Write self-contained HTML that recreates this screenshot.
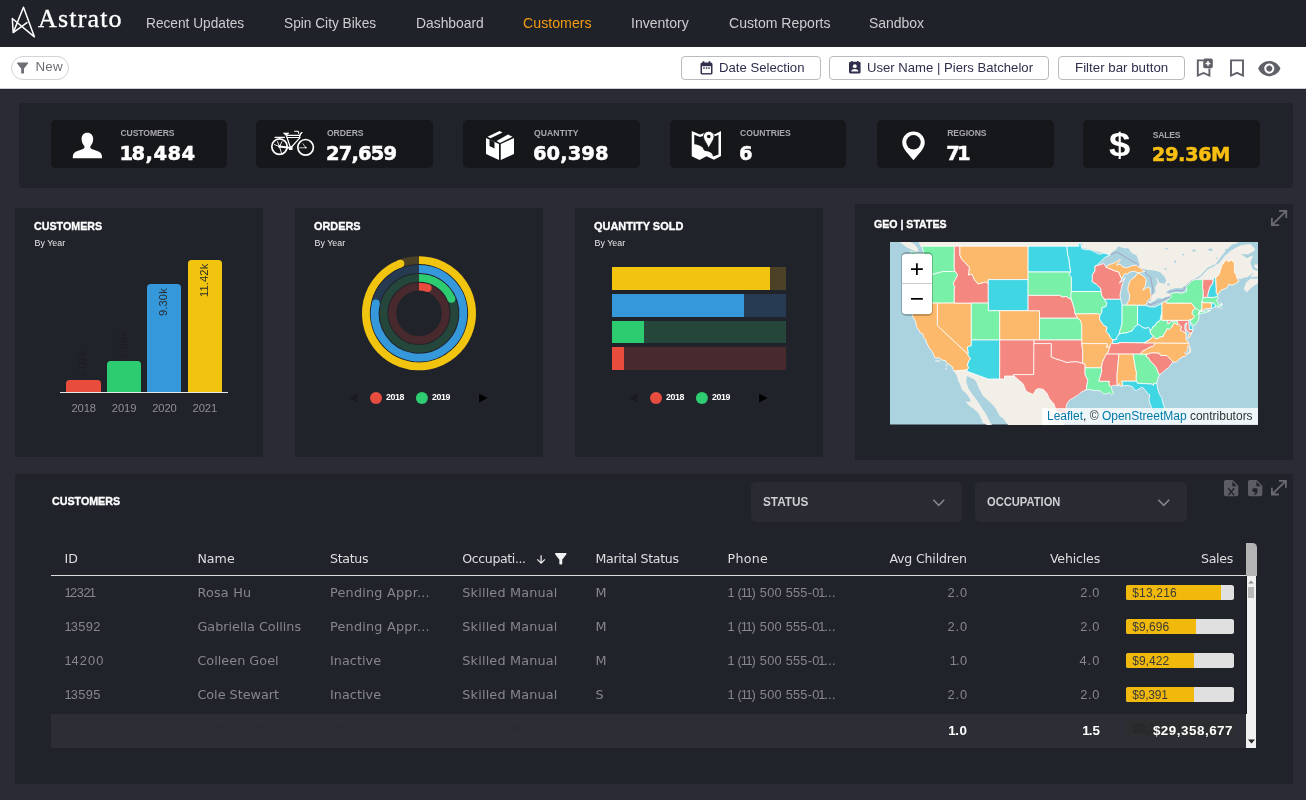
<!DOCTYPE html>
<html lang="en"><head><meta charset="utf-8"><title>Astrato - Customers</title><style>html,body{margin:0;padding:0}body{width:1306px;height:800px;background:#2a2b35;position:relative;overflow:hidden;font-family:"Liberation Sans",sans-serif}
.b{position:absolute;display:block}.t{position:absolute;white-space:nowrap;display:block}.n1{margin:0 -0.1em}svg{overflow:visible}</style></head>
<body>
<div id="app" style="position:absolute;left:0;top:0;width:1306px;height:800px;will-change:transform">
<div class="b" style="left:0px;top:0px;width:1306px;height:47px;background:#20222a;"></div>
<svg class="b" style="left:8px;top:2px;" width="32" height="40" viewBox="8 2 32 40"><path d="M12.3 18.5L34.4 36.8L23.5 7.2L13.2 32.6L27 22.6M12.3 18.5L13.2 32.6" fill="none" stroke="#fff" stroke-width="1.5" stroke-linejoin="round" stroke-linecap="round"/></svg>
<span id="logo" class="t" style="left:38.00px;top:5.82px;font:400 26px/1 'Liberation Serif', serif;color:#fff;letter-spacing:1.176px;-webkit-text-stroke:0.35px #fff;">Astrato</span>
<span id="nav0" class="t" style="left:146.00px;top:15.00px;font:400 15px/1 'Liberation Sans', sans-serif;color:#cdcdcf;transform:scaleX(0.9128);transform-origin:0 0;">Recent Updates</span>
<span id="nav1" class="t" style="left:283.90px;top:15.00px;font:400 15px/1 'Liberation Sans', sans-serif;color:#cdcdcf;transform:scaleX(0.9130);transform-origin:0 0;">Spin City Bikes</span>
<span id="nav2" class="t" style="left:415.90px;top:15.00px;font:400 15px/1 'Liberation Sans', sans-serif;color:#cdcdcf;transform:scaleX(0.9238);transform-origin:0 0;">Dashboard</span>
<span id="nav3" class="t" style="left:523.40px;top:15.00px;font:400 15px/1 'Liberation Sans', sans-serif;color:#f39c12;transform:scaleX(0.9458);transform-origin:0 0;">Customers</span>
<span id="nav4" class="t" style="left:631.20px;top:15.00px;font:400 15px/1 'Liberation Sans', sans-serif;color:#cdcdcf;transform:scaleX(0.9367);transform-origin:0 0;">Inventory</span>
<span id="nav5" class="t" style="left:728.50px;top:15.00px;font:400 15px/1 'Liberation Sans', sans-serif;color:#cdcdcf;transform:scaleX(0.9366);transform-origin:0 0;">Custom Reports</span>
<span id="nav6" class="t" style="left:869.20px;top:15.00px;font:400 15px/1 'Liberation Sans', sans-serif;color:#cdcdcf;transform:scaleX(0.9304);transform-origin:0 0;">Sandbox</span>
<div class="b" style="left:0px;top:47px;width:1306px;height:41px;background:#fff;"></div>
<div class="b" style="left:0px;top:88px;width:1306px;height:1px;background:#cfcfd3;"></div>
<div class="b" style="left:0px;top:89px;width:1306px;height:1px;background:#20212a;"></div>
<div class="b" style="left:11px;top:56px;width:58px;height:23.5px;border:1px solid #d2d2d7;border-radius:12px;box-sizing:border-box"></div>
<svg class="b" style="left:17.4px;top:61.6px;" width="11.200000000000003" height="11.999999999999993" viewBox="4 4 16 16"><path d="M4.25 5.61C6.27 8.2 10 13 10 13v6c0 .55.45 1 1 1h2c.55 0 1-.45 1-1v-6s3.72-4.8 5.74-7.39A.998.998 0 0 0 18.95 4H5.04c-.83 0-1.3.95-.79 1.61z" fill="#6d6d76"/></svg>
<span id="new" class="t" style="left:35.50px;top:60.46px;font:400 13.4px/1 'Liberation Sans', sans-serif;color:#6d6d76;letter-spacing:0.152px;">New</span>
<div class="b" style="left:681.4px;top:56px;width:139.39999999999998px;height:23.6px;border:1px solid #b9b9c0;border-radius:4px;box-sizing:border-box"></div>
<div class="b" style="left:829.2px;top:56px;width:220.20000000000005px;height:23.6px;border:1px solid #b9b9c0;border-radius:4px;box-sizing:border-box"></div>
<div class="b" style="left:1058.1px;top:56px;width:126.5px;height:23.6px;border:1px solid #b9b9c0;border-radius:4px;box-sizing:border-box"></div>
<svg class="b" style="left:699.5px;top:61px;" width="13.0" height="14" viewBox="0 0 13 14"><path d="M2.2 1.6h8.6a1.7 1.7 0 0 1 1.7 1.7v8.6a1.7 1.7 0 0 1-1.7 1.7H2.2a1.7 1.7 0 0 1-1.7-1.7V3.3a1.7 1.7 0 0 1 1.7-1.7z" fill="#2f2f4d"/><rect x="2" y="5.2" width="9" height="6.9" fill="#fff"/><rect x="2.7" y="0.2" width="1.7" height="2.6" fill="#2f2f4d"/><rect x="8.6" y="0.2" width="1.7" height="2.6" fill="#2f2f4d"/><rect x="3.2" y="6.3" width="1.5" height="1.5" fill="#2f2f4d"/><rect x="5.75" y="6.3" width="1.5" height="1.5" fill="#2f2f4d"/><rect x="8.3" y="6.3" width="1.5" height="1.5" fill="#2f2f4d"/></svg>
<span id="fb1" class="t" style="left:718.70px;top:60.59px;font:400 13.6px/1 'Liberation Sans', sans-serif;color:#2f2f4d;transform:scaleX(0.9670);transform-origin:0 0;">Date Selection</span>
<svg class="b" style="left:848.6px;top:61.2px;" width="11.600000000000023" height="12.599999999999994" viewBox="0 0 11.6 12.6"><rect x="0" y="0.8" width="11.6" height="11.8" rx="1.5" fill="#2f2f4d"/><rect x="2.2" y="0" width="1.5" height="2" fill="#2f2f4d"/><rect x="7.9" y="0" width="1.5" height="2" fill="#2f2f4d"/><circle cx="5.8" cy="5.2" r="1.9" fill="#fff"/><path d="M2.2 10.6c0-2 2.4-2.6 3.6-2.6s3.6.6 3.6 2.6z" fill="#fff"/></svg>
<span id="fb2" class="t" style="left:866.80px;top:60.59px;font:400 13.6px/1 'Liberation Sans', sans-serif;color:#2f2f4d;transform:scaleX(0.9651);transform-origin:0 0;">User Name | Piers Batchelor</span>
<span id="fb3" class="t" style="left:1074.60px;top:60.59px;font:400 13.6px/1 'Liberation Sans', sans-serif;color:#2f2f4d;transform:scaleX(0.9790);transform-origin:0 0;">Filter bar button</span>
<svg class="b" style="left:1196px;top:58px;" width="18" height="20" viewBox="0 0 18 20"><path d="M7.2 2.4H1.8V17.6L7.6 15l5.8 2.6V10.4" fill="none" stroke="#5f6068" stroke-width="1.9"/><rect x="7.2" y="0.6" width="9.6" height="9.6" rx="1.6" fill="#5f6068"/><path d="M12 3v4.8M9.6 5.4h4.8" stroke="#fff" stroke-width="1.5"/></svg>
<svg class="b" style="left:1229px;top:58px;" width="16" height="20" viewBox="0 0 16 20"><path d="M2 2.4H14V17.6L8 14.8L2 17.6z" fill="none" stroke="#5f6068" stroke-width="1.9" stroke-linejoin="miter"/></svg>
<svg class="b" style="left:1257.7px;top:60.5px;" width="22.59999999999991" height="15.200000000000003" viewBox="1 4.5 22 15"><path d="M12 4.5C7 4.5 2.73 7.61 1 12c1.73 4.39 6 7.5 11 7.5s9.27-3.11 11-7.5c-1.73-4.39-6-7.5-11-7.5zM12 17c-2.76 0-5-2.24-5-5s2.24-5 5-5 5 2.24 5 5-2.24 5-5 5zm0-8c-1.66 0-3 1.34-3 3s1.34 3 3 3 3-1.34 3-3-1.34-3-3-3z" fill="#5f6068"/></svg>
<div class="b" style="left:19px;top:103px;width:1274px;height:84.5px;background:#21232b;border-radius:4px;"></div>
<div class="b" style="left:51px;top:120px;width:176px;height:48px;background:#16171b;border-radius:5px;"></div>
<div class="b" style="left:256px;top:120px;width:177px;height:48px;background:#16171b;border-radius:5px;"></div>
<div class="b" style="left:463px;top:120px;width:177px;height:48px;background:#16171b;border-radius:5px;"></div>
<div class="b" style="left:670px;top:120px;width:176px;height:48px;background:#16171b;border-radius:5px;"></div>
<div class="b" style="left:877px;top:120px;width:177px;height:48px;background:#16171b;border-radius:5px;"></div>
<div class="b" style="left:1083px;top:120px;width:177px;height:48px;background:#16171b;border-radius:5px;"></div>
<span id="kl0" class="t" style="left:120.40px;top:129.02px;font:700 8.6px/1 'Liberation Sans', sans-serif;color:#a9a9ad;letter-spacing:-0.071px;">CUSTOMERS</span>
<span id="kv0" class="t" style="left:121.35px;top:143.70px;font:700 19.5px/1 'DejaVu Sans', sans-serif;color:#fff;letter-spacing:0.462px;-webkit-text-stroke:0.5px #fff;"><span style="margin:0 -0.1em">1</span>8,484</span>
<span id="kl1" class="t" style="left:326.90px;top:129.02px;font:700 8.6px/1 'Liberation Sans', sans-serif;color:#a9a9ad;letter-spacing:-0.016px;">ORDERS</span>
<span id="kv1" class="t" style="left:325.90px;top:143.70px;font:700 19.5px/1 'DejaVu Sans', sans-serif;color:#fff;letter-spacing:-0.810px;-webkit-text-stroke:0.5px #fff;">27,659</span>
<span id="kl2" class="t" style="left:533.90px;top:129.02px;font:700 8.6px/1 'Liberation Sans', sans-serif;color:#a9a9ad;letter-spacing:0.111px;">QUANTITY</span>
<span id="kv2" class="t" style="left:532.90px;top:143.70px;font:700 19.5px/1 'DejaVu Sans', sans-serif;color:#fff;letter-spacing:0.090px;-webkit-text-stroke:0.5px #fff;">60,398</span>
<span id="kl3" class="t" style="left:740.00px;top:129.02px;font:700 8.6px/1 'Liberation Sans', sans-serif;color:#a9a9ad;letter-spacing:0.022px;">COUNTRIES</span>
<span id="kv3" class="t" style="left:739.00px;top:143.70px;font:700 19.5px/1 'DejaVu Sans', sans-serif;color:#fff;-webkit-text-stroke:0.5px #fff;">6</span>
<span id="kl4" class="t" style="left:947.20px;top:129.02px;font:700 8.6px/1 'Liberation Sans', sans-serif;color:#a9a9ad;letter-spacing:-0.040px;">REGIONS</span>
<span id="kv4" class="t" style="left:946.20px;top:143.70px;font:700 19.5px/1 'DejaVu Sans', sans-serif;color:#fff;letter-spacing:-0.881px;-webkit-text-stroke:0.5px #fff;">7<span style="margin:0 -0.1em">1</span></span>
<span id="kl5" class="t" style="left:1152.80px;top:130.82px;font:700 8.6px/1 'Liberation Sans', sans-serif;color:#a9a9ad;letter-spacing:-0.239px;">SALES</span>
<span id="kv5" class="t" style="left:1151.80px;top:144.50px;font:700 19.5px/1 'DejaVu Sans', sans-serif;color:#f9bf10;letter-spacing:-0.479px;-webkit-text-stroke:0.5px #f9bf10;">29.36M</span>
<svg class="b" style="left:72px;top:132px;" width="31" height="27" viewBox="0 0 31 27"><path d="M15.3 0.8c3.6 0 5.9 2.6 5.9 6.3 0 2.9-1.2 5.4-2.6 6.8-.5.5-.4 2.2.3 2.6 2.4 1.300 7.600 2.300 9.800 4.600 1.100 1.100 1.300 3.300 1.300 5.100H.800c0-1.800.2-4 1.300-5.100 2.200-2.300 7.400-3.300 9.800-4.600.7-.4.8-2.100.3-2.600-1.400-1.400-2.600-3.900-2.600-6.800 0-3.700 2.100-6.300 5.700-6.300z" fill="#fff"/></svg>
<svg class="b" style="left:270px;top:128px;" width="46" height="30" viewBox="270 128 46 30"><g fill="none" stroke="#fff" stroke-linecap="round" stroke-linejoin="round"><circle cx="279.5" cy="146.6" r="7.7" stroke-width="1.7"/><circle cx="305.6" cy="147.3" r="7.8" stroke-width="1.7"/><path d="M286 134.500L290.600 148M287.500 135.300H299.600M287.700 137.500H299.300M300 137.700L291.500 147M301 133L299.300 137.600M275 137.300H284.500" stroke-width="1.200"/><path d="M279.500 146.600L289.500 147.700" stroke-width="2"/><path d="M279.500 146.600l-2-5M279.500 146.600l2.500-5M279.500 146.600l-5-2M279.500 146.600l2 6.500" stroke-width="0.900"/><path d="M305.600 147.500l-2.600-3.800M299.600 147.800h5.600" stroke-width="0.900" stroke-opacity="0.800"/><path d="M294.600 131.300h3.600l.5 2.200M300.200 134.300l1.800-2" stroke-width="1.100"/></g><path d="M283.300 133h5.700l-1.700 1.800h-2.200z" fill="#fff" stroke="#fff" stroke-width="0.600" stroke-linejoin="round"/><rect x="289" y="146.400" width="3.600" height="3.600" rx="0.600" fill="#fff"/><circle cx="279.500" cy="146.600" r="1.300" fill="#fff"/><circle cx="305.800" cy="147.600" r="0.900" fill="#fff"/></svg>
<svg class="b" style="left:485px;top:130px;" width="30" height="31" viewBox="485 130 30 31"><path d="M486 138L499 144V160L486 154z M500.750 144L514 138V154L500.750 160z M487.500 136.750L499.500 131L502.500 132.500L490.500 138.250z M496.500 141L508 134.500L512.500 136.750L500 143z" fill="#fff"/><path d="M489.500 139.600V146L494.500 148.500V141.900z" fill="#16171b"/></svg>
<svg class="b" style="left:691px;top:130px;" width="31" height="31" viewBox="691 130 31 31"><path d="M691.750 131L700 134.500L708.750 131.500L715 134.250L721 131V156L714 159.750L706.500 156.250L699.500 160L691.750 156.250z" fill="#fff"/><path d="M694.250 134.750L700 136.900L708.600 134L715 136.300L718.500 134.700V154.500L713 156.500C712.600 154.500 712 153.300 710.500 152.500C708.500 151.200 706 151.600 704.300 150.600C703.200 149.600 703.300 148.200 702 147.100C700 145.500 697 144.600 694.250 144.250z" fill="#16171b"/><path d="M708.750 131.250c3 0 5.400 2.300 5.400 5.200 0 3.700-3.900 7.300-5.400 12.100-1.500-4.800-5.400-8.400-5.400-12.100 0-2.900 2.400-5.200 5.400-5.200z" fill="#fff" stroke="#16171b" stroke-width="0.900"/><circle cx="708.750" cy="136.500" r="1.800" fill="#16171b"/></svg>
<svg class="b" style="left:902px;top:130.5px;" width="23.5" height="30.0" viewBox="902 130.500 23.500 30"><path d="M913.500 131c6.300 0 11.250 4.800 11.250 11 0 6.600-6.800 12-11.250 17.800-4.450-5.800-11.250-11.200-11.250-17.800 0-6.200 4.950-11 11.250-11z" fill="#fff"/><circle cx="913.500" cy="141.800" r="7.200" fill="#16171b"/></svg>
<span id="dollar" class="t" style="left:1108.60px;top:128.07px;font:700 33px/1 'Liberation Sans', sans-serif;color:#fff;transform-origin:0 0;transform:scaleX(1.16);">$</span>
<div class="b" style="left:15.2px;top:208px;width:247.5px;height:249px;background:#21232b;"></div>
<div class="b" style="left:295.2px;top:208px;width:247.50000000000006px;height:249px;background:#21232b;"></div>
<div class="b" style="left:575.2px;top:208px;width:247.5px;height:249px;background:#21232b;"></div>
<div class="b" style="left:855px;top:204px;width:438px;height:256px;background:#21232b;"></div>
<span id="ct1" class="t" style="left:34.20px;top:220.83px;font:700 11.3px/1 'Liberation Sans', sans-serif;color:#fff;-webkit-text-stroke:0.35px #fff;transform:scaleX(0.9474);transform-origin:0 0;">CUSTOMERS</span>
<span id="ct2" class="t" style="left:314.20px;top:220.83px;font:700 11.3px/1 'Liberation Sans', sans-serif;color:#fff;-webkit-text-stroke:0.35px #fff;transform:scaleX(0.9639);transform-origin:0 0;">ORDERS</span>
<span id="ct3" class="t" style="left:594.20px;top:220.83px;font:700 11.3px/1 'Liberation Sans', sans-serif;color:#fff;-webkit-text-stroke:0.35px #fff;transform:scaleX(0.9700);transform-origin:0 0;">QUANTITY SOLD</span>
<span id="cs0" class="t" style="left:34.50px;top:239.45px;font:400 8.8px/1 'Liberation Sans', sans-serif;color:#e8e8e8;letter-spacing:0.045px;">By Year</span>
<span id="cs1" class="t" style="left:314.50px;top:239.45px;font:400 8.8px/1 'Liberation Sans', sans-serif;color:#e8e8e8;letter-spacing:0.045px;">By Year</span>
<span id="cs2" class="t" style="left:594.50px;top:239.45px;font:400 8.8px/1 'Liberation Sans', sans-serif;color:#e8e8e8;letter-spacing:0.045px;">By Year</span>
<span id="ct4" class="t" style="left:874.30px;top:218.99px;font:700 11px/1 'Liberation Sans', sans-serif;color:#fff;-webkit-text-stroke:0.35px #fff;transform:scaleX(0.9615);transform-origin:0 0;">GEO | STATES</span>
<div class="b" style="left:66.2px;top:380.1px;width:34.4px;height:11.899999999999977px;background:#e74c3c;border-radius:3.5px 3.5px 0 0"></div>
<div class="b" style="left:106.6px;top:360.9px;width:34.4px;height:31.100000000000023px;background:#2ecc71;border-radius:3.5px 3.5px 0 0"></div>
<div class="b" style="left:147.1px;top:284.1px;width:34.4px;height:107.89999999999998px;background:#3498db;border-radius:3.5px 3.5px 0 0"></div>
<div class="b" style="left:187.6px;top:259.8px;width:34.4px;height:132.2px;background:#f1c40f;border-radius:3.5px 3.5px 0 0"></div>
<div class="b" style="left:59.5px;top:392px;width:168.5px;height:1.1999999999999886px;background:#e6e6e6;"></div>
<span id="yr0" class="t" style="left:71.40px;top:402.62px;font:400 11.2px/1 'Liberation Sans', sans-serif;color:#8f8f93;letter-spacing:-0.097px;">2018</span>
<span id="yr1" class="t" style="left:111.80px;top:402.62px;font:400 11.2px/1 'Liberation Sans', sans-serif;color:#8f8f93;letter-spacing:-0.097px;">2019</span>
<span id="yr2" class="t" style="left:152.20px;top:402.62px;font:400 11.2px/1 'Liberation Sans', sans-serif;color:#8f8f93;letter-spacing:-0.097px;">2020</span>
<span id="yr3" class="t" style="left:192.60px;top:402.62px;font:400 11.2px/1 'Liberation Sans', sans-serif;color:#8f8f93;letter-spacing:-0.097px;">2021</span>
<span id='v0' class='t' style="left:83.4px;top:378px;font:400 11.2px/1 'Liberation Sans',sans-serif;color:#1d1e25;transform-origin:0 0;transform:rotate(-90deg) translate(0,-50%);letter-spacing:0.1px">1.01k</span>
<span id='v1' class='t' style="left:123.8px;top:359px;font:400 11.2px/1 'Liberation Sans',sans-serif;color:#1d1e25;transform-origin:0 0;transform:rotate(-90deg) translate(0,-50%);letter-spacing:0.1px">2.66k</span>
<span id='v2' class='t' style="left:164.4px;top:315.5px;font:400 11.2px/1 'Liberation Sans',sans-serif;color:#2b2b2b;transform-origin:0 0;transform:rotate(-90deg) translate(0,-50%);letter-spacing:0.1px">9.30k</span>
<span id='v3' class='t' style="left:204.8px;top:296.5px;font:400 11.2px/1 'Liberation Sans',sans-serif;color:#2b2b2b;transform-origin:0 0;transform:rotate(-90deg) translate(0,-50%);letter-spacing:0.1px">11.42k</span>
<svg class="b" style="left:359px;top:253px;" width="120" height="120" viewBox="359 253 120 120"><circle cx="419" cy="313.3" r="53.1" fill="none" stroke="#4a4126" stroke-width="7.8"/><path d="M419 260.2A53.1 53.1 0 1 1 400.40 263.56" fill="none" stroke="#f1c40f" stroke-width="7.8"/><circle cx="400.40" cy="263.56" r="3.9" fill="#f1c40f"/><circle cx="419" cy="313.3" r="44.3" fill="none" stroke="#263a52" stroke-width="7.8"/><path d="M419 269.0A44.3 44.3 0 1 1 375.84 303.33" fill="none" stroke="#3498db" stroke-width="7.8"/><circle cx="375.84" cy="303.33" r="3.9" fill="#3498db"/><circle cx="419" cy="313.3" r="35.5" fill="none" stroke="#25463a" stroke-width="7.8"/><path d="M419 277.8A35.5 35.5 0 0 1 451.43 298.86" fill="none" stroke="#2ecc71" stroke-width="7.8"/><circle cx="451.43" cy="298.86" r="3.9" fill="#2ecc71"/><circle cx="419" cy="313.3" r="26.7" fill="none" stroke="#482a2e" stroke-width="7.8"/><path d="M419 286.6A26.7 26.7 0 0 1 427.69 288.05" fill="none" stroke="#e74c3c" stroke-width="7.8"/><circle cx="427.69" cy="288.05" r="3.9" fill="#e74c3c"/></svg>
<svg class="b" style="left:345px;top:390px;" width="150" height="16" viewBox="345 390 150 16"><path d="M357.2 393.8V402.5L349.5 398.1z" fill="#1a1b21"/><path d="M479.2 393.8V402.5L487.4 398.1z" fill="#000"/><circle cx="376" cy="397.9" r="6" fill="#e74c3c"/><circle cx="421.9" cy="397.9" r="6" fill="#2ecc71"/></svg>
<span id="lg1a" class="t" style="left:386.10px;top:393.35px;font:700 8.8px/1 'Liberation Sans', sans-serif;color:#fff;letter-spacing:-0.459px;">2018</span>
<span id="lg1b" class="t" style="left:432.00px;top:393.35px;font:700 8.8px/1 'Liberation Sans', sans-serif;color:#fff;letter-spacing:-0.393px;">2019</span>
<svg class="b" style="left:625px;top:390px;" width="150" height="16" viewBox="625 390 150 16"><path d="M637.2 393.8V402.5L629.5 398.1z" fill="#1a1b21"/><path d="M759.2 393.8V402.5L767.4 398.1z" fill="#000"/><circle cx="656" cy="397.9" r="6" fill="#e74c3c"/><circle cx="701.9" cy="397.9" r="6" fill="#2ecc71"/></svg>
<span id="lg2a" class="t" style="left:666.10px;top:393.35px;font:700 8.8px/1 'Liberation Sans', sans-serif;color:#fff;letter-spacing:-0.459px;">2018</span>
<span id="lg2b" class="t" style="left:712.00px;top:393.35px;font:700 8.8px/1 'Liberation Sans', sans-serif;color:#fff;letter-spacing:-0.393px;">2019</span>
<div class="b" style="left:611.7px;top:266.9px;width:174.5999999999999px;height:22.900000000000034px;background:#4a4126;"></div>
<div class="b" style="left:611.7px;top:266.9px;width:158.5999999999999px;height:22.900000000000034px;background:#f1c40f;"></div>
<div class="b" style="left:611.7px;top:293.8px;width:174.5999999999999px;height:22.80000000000001px;background:#263a52;"></div>
<div class="b" style="left:611.7px;top:293.8px;width:132.29999999999995px;height:22.80000000000001px;background:#3498db;"></div>
<div class="b" style="left:611.7px;top:320.5px;width:174.5999999999999px;height:22.80000000000001px;background:#25463a;"></div>
<div class="b" style="left:611.7px;top:320.5px;width:32.299999999999955px;height:22.80000000000001px;background:#2ecc71;"></div>
<div class="b" style="left:611.7px;top:347px;width:174.5999999999999px;height:23px;background:#482a2e;"></div>
<div class="b" style="left:611.7px;top:347px;width:12.299999999999955px;height:23px;background:#e74c3c;"></div>
<svg class="b" style="left:890px;top:242px;overflow:hidden" width="368" height="182.5" viewBox="0 0 368 182.5"><rect width="368" height="182.5" fill="#aad3df"/><g fill="#f2efe9"><path d="M28.6 -2.8L29.2 2.0L30.3 4.2L32.0 5.1L189.6 5.1L220.3 12.8L222.6 9.8L226.0 7.7L228.3 4.6L234.0 6.4L238.5 6.4L241.4 11.1L246.5 13.6L247.6 17.0L249.3 21.2L248.8 24.9L250.2 25.2L251.6 27.0L256.2 27.8L260.7 28.2L265.8 29.1L269.8 30.3L274.4 34.8L276.1 38.8L274.4 41.6L269.5 40.8L266.4 35.6L265.3 36.0L267.5 40.8L265.0 45.2L265.3 50.3L261.3 53.4L260.7 56.5L260.1 58.8L257.3 59.6L257.3 61.1L260.7 61.1L264.7 58.8L268.1 56.1L272.7 56.9L274.9 55.3L279.5 54.6L280.9 53.8L280.3 51.5L276.1 51.1L278.4 48.3L286.3 46.0L291.4 46.4L294.9 44.0L297.7 43.2L301.7 39.2L305.1 37.7L320.5 38.4L331.8 37.6L337.5 33.5L345.5 35.2L347.3 36.4L350.0 37.2L354.3 35.4L357.4 35.2L360.6 32.7L362.5 31.5L364.0 31.1L360.8 34.0L360.6 34.9L364.3 34.8L368.2 34.8L368.2 36.4L363.7 36.8L360.8 36.4L356.0 40.6L353.7 47.1L356.9 50.3L362.0 45.3L368.2 40.8L371.7 40.0L371.7 29.5L367.1 28.7L363.1 27.4L361.4 23.7L360.3 20.4L361.4 17.9L363.1 13.2L360.3 14.5L356.6 16.2L352.9 13.2L350.6 12.8L354.6 11.9L357.4 12.4L362.0 10.2L364.8 8.5L364.8 6.4L360.3 2.0L351.7 3.1L346.1 5.5L340.4 8.9L334.4 14.2L329.0 21.2L325.0 22.9L329.0 17.5L333.5 11.5L337.5 6.8L342.4 2.5L346.6 1.6L351.7 -6.3L351.7 -13.5L28.6 -13.5Z"/><path d="M4.7 -6.3L9.8 -0.2L13.8 3.3L17.8 5.9L22.4 8.1L26.3 9.8L28.3 9.4L28.0 6.8L24.9 2.5L20.1 -0.2L16.1 -6.3Z"/><path d="M363.7 24.5L366.0 21.6L371.7 26.2L371.7 28.7L366.5 26.6Z"/><path d="M363.1 -3.2L368.8 0.7L377.3 3.3L377.3 -1.9L368.8 -3.7Z"/><path d="M63.8 129.0L66.7 133.6L68.4 139.2L70.4 142.9L71.8 147.5L77.0 152.4L80.7 158.2L79.8 159.8L75.4 159.8L79.8 164.3L84.0 167.0L88.3 171.0L91.8 177.9L92.3 180.4L95.2 181.7L98.6 184.2L102.6 184.2L99.2 178.5L95.7 171.6L91.8 165.9L90.1 163.1L87.2 158.8L82.7 152.7L78.7 147.1L76.1 139.2L77.0 133.9L84.1 137.2L86.6 140.5L88.9 146.5L92.9 153.7L99.2 159.4L104.3 164.6L106.0 167.2L109.7 174.1L113.4 176.7L116.2 180.4L119.1 184.2L174.2 184.2L174.8 177.9L177.4 171.9L172.5 168.4L166.9 158.8L155.5 145.8L138.4 139.2L127.0 131.2L104.3 132.6L81.5 125.8L70.1 125.8Z"/></g><g fill="#aad3df"><path d="M205.5 24.5L220.3 12.8L222.6 9.8L226.0 7.7L228.3 4.6L234.0 6.4L238.5 6.4L241.4 11.1L246.5 13.6L247.6 17.0L249.3 21.2L248.8 24.9L248.8 27.0L206.7 27.0Z"/><path d="M228.3 29.5L250.5 28.7L251.6 27.0L256.2 27.8L260.7 28.2L265.8 29.1L269.8 30.3L274.4 34.8L276.1 38.8L274.4 41.6L269.8 40.8L268.1 35.6L265.3 35.6L267.5 40.8L265.0 45.2L265.3 50.3L261.3 53.4L260.7 56.5L260.1 58.8L257.3 59.6L257.3 61.1L260.7 61.1L264.7 58.8L268.1 56.1L272.7 56.9L274.9 55.3L279.5 54.6L280.9 53.8L280.6 56.5L272.1 62.7L255.0 65.7L228.3 65.7Z"/><path d="M280.3 51.5L276.1 51.1L278.4 48.3L286.3 46.0L291.4 46.4L294.9 44.0L297.7 43.2L301.7 39.2L301.1 40.8L296.0 46.4L296.0 50.3L280.6 52.6Z"/></g><path d="M296.0 44.0L301.7 38.8L305.1 37.6L311.3 33.5L317.6 26.6L325.0 22.9" fill="none" stroke="#aad3df" stroke-width="1.2"/><ellipse cx="320.5" cy="7.7" rx="2.2" ry="1.2" fill="#aad3df"/><ellipse cx="275.5" cy="27.0" rx="1.6" ry="0.8" fill="#aad3df"/><ellipse cx="304.0" cy="8.5" rx="1.8" ry="1.0" fill="#aad3df"/><ellipse cx="276.6" cy="6.8" rx="1.4" ry="0.8" fill="#aad3df"/><ellipse cx="278.4" cy="42.4" rx="1.2" ry="1.2" fill="#aad3df"/><ellipse cx="190.2" cy="2.5" rx="2.2" ry="1.6" fill="#aad3df"/><ellipse cx="199.8" cy="7.7" rx="1.6" ry="0.7" fill="#aad3df"/><ellipse cx="259.6" cy="57.7" rx="1.3" ry="1.3" fill="#aad3df"/><ellipse cx="293.1" cy="12.8" rx="1.2" ry="0.7" fill="#aad3df"/><ellipse cx="285.2" cy="19.5" rx="0.8" ry="1.6" fill="#aad3df"/><ellipse cx="326.7" cy="16.2" rx="0.8" ry="0.8" fill="#aad3df"/><ellipse cx="335.8" cy="7.7" rx="0.9" ry="0.9" fill="#aad3df"/><path d="M220.3 12.8L227.2 10.2L247.1 22.0L248.8 25.4L251.6 27.0L254.5 28.7L255.6 31.1L260.7 35.2L263.0 48.7L261.3 53.4L260.7 56.5L257.3 59.6L259.6 63.4L268.1 59.6L280.6 55.0L280.3 51.8L279.5 49.9L286.3 48.5L293.1 48.5L295.4 44.8L301.7 38.8L305.1 37.6L323.3 37.6" fill="none" stroke="#9d83b3" stroke-opacity="0.7" stroke-width="0.9"/><ellipse cx="48.0" cy="119.0" rx="2.2" ry="0.8" fill="#f6f3ee"/><ellipse cx="56.5" cy="123.2" rx="1.0" ry="0.7" fill="#f6f3ee"/><ellipse cx="55.9" cy="126.5" rx="0.7" ry="1.0" fill="#f6f3ee"/><ellipse cx="45.7" cy="118.8" rx="0.8" ry="0.6" fill="#f6f3ee"/><ellipse cx="328.4" cy="65.7" rx="1.2" ry="0.6" fill="#f6f3ee"/><ellipse cx="331.5" cy="66.6" rx="1.0" ry="0.6" fill="#f6f3ee"/><ellipse cx="267.5" cy="180.1" rx="2.5" ry="0.5" fill="#f6f3ee"/><g stroke="#fff" stroke-opacity="0.8" stroke-width="1" stroke-linejoin="round"><path d="M31.7 4.2L64.3 4.2L64.2 26.0L64.9 29.5L53.2 29.5L51.4 30.0L44.5 31.9L40.6 32.7L36.6 32.1L34.3 33.1L31.7 32.3L30.9 28.7L28.0 27.8L24.6 27.4L24.2 24.1L24.1 22.0L20.6 9.5L27.5 11.7L31.7 11.5L33.7 17.0L34.3 13.6L33.2 8.5Z" fill="#78f0a8"/><path d="M24.6 27.4L28.0 27.8L30.9 28.7L31.7 32.3L34.3 33.1L36.6 32.1L40.6 32.7L44.5 31.9L51.4 30.0L53.2 29.5L64.9 29.5L67.0 31.5L67.5 33.5L66.2 36.0L65.3 37.6L64.2 39.6L63.3 42.4L64.8 44.2L64.3 46.9L64.3 61.1L23.5 61.1L22.4 56.5L21.5 54.7L23.8 47.9L24.1 40.8L24.9 33.5Z" fill="#78f0a8"/><path d="M23.5 61.1L47.4 61.1L47.4 83.6L77.9 112.1L78.3 113.5L80.7 116.9L79.1 118.3L77.4 123.1L78.7 125.8L77.4 127.7L63.8 129.0L63.0 126.8L62.7 125.1L56.5 120.7L55.9 118.8L51.9 118.0L49.7 116.1L44.7 115.9L43.7 112.8L42.3 109.3L40.0 107.2L36.6 100.9L36.0 98.3L33.2 94.4L33.2 92.3L30.3 90.8L26.3 84.3L25.8 79.9L22.6 74.3L22.4 72.8L24.1 68.7L23.5 63.0Z" fill="#fcb96c"/><path d="M47.4 61.1L81.3 61.1L81.3 103.7L79.5 104.2L77.3 105.0L77.8 107.9L78.3 111.0L77.9 112.1L47.4 83.6Z" fill="#fcb96c"/><path d="M64.3 4.2L69.9 4.2L69.9 13.0L71.8 17.4L75.8 21.2L78.2 24.3L79.5 24.9L79.0 30.3L78.4 33.1L81.8 32.0L84.6 38.0L85.7 39.1L88.1 42.0L91.2 41.1L95.9 39.9L98.3 41.8L98.3 61.1L64.3 61.1L64.3 46.9L64.8 44.2L63.3 42.4L64.2 39.6L65.3 37.6L66.2 36.0L67.5 33.5L67.0 31.5L64.9 29.5L64.2 26.0Z" fill="#f4877f"/><path d="M69.9 4.2L138.1 4.2L138.1 37.6L98.3 37.6L98.3 41.8L95.9 39.9L91.2 41.1L88.1 42.0L85.7 39.1L84.6 38.0L81.8 32.0L78.4 33.1L79.0 30.3L79.5 24.9L78.2 24.3L75.8 21.2L71.8 17.4L69.9 13.0L69.9 4.2Z" fill="#fcb96c"/><path d="M98.3 37.6L138.1 37.6L138.1 68.7L98.3 68.7Z" fill="#41d6e4"/><path d="M81.3 61.1L98.3 61.1L98.3 68.7L109.7 68.7L109.7 98.0L81.3 98.0Z" fill="#78f0a8"/><path d="M109.7 68.7L149.5 68.7L149.5 98.0L109.7 98.0Z" fill="#fcb96c"/><path d="M81.3 98.0L109.7 98.0L109.7 137.0L98.2 137.0L76.9 129.3L77.4 127.7L78.7 125.8L77.4 123.1L79.1 118.3L80.7 116.9L78.3 113.5L77.9 112.1L78.3 111.0L77.8 107.9L77.3 105.0L79.5 104.2L81.3 103.7Z" fill="#41d6e4"/><path d="M109.7 98.0L144.1 98.0L143.8 132.6L123.5 132.6L124.0 134.0L114.5 134.0L114.5 137.0L109.7 137.0Z" fill="#f4877f"/><path d="M138.1 4.2L176.9 4.2L177.7 12.8L179.1 17.0L179.4 22.0L180.7 29.5L180.7 30.0L138.1 30.0Z" fill="#41d6e4"/><path d="M138.1 30.0L180.7 30.0L179.1 32.7L181.4 35.2L181.4 49.5L181.4 49.5L180.8 53.4L181.4 57.4L181.4 57.4L179.9 56.9L176.0 54.4L172.5 55.2L169.7 53.4L138.1 53.4Z" fill="#78f0a8"/><path d="M138.1 53.4L169.7 53.4L172.5 55.2L176.0 54.4L179.9 56.9L181.4 57.4L181.4 57.4L183.3 63.4L184.5 67.2L184.8 71.0L185.2 71.9L187.8 76.2L149.5 76.2L149.5 68.7L138.1 68.7Z" fill="#f4877f"/><path d="M149.5 76.2L187.8 76.2L190.2 78.1L191.9 82.7L191.8 98.0L149.5 98.0Z" fill="#78f0a8"/><path d="M144.1 98.0L191.8 98.0L191.8 101.6L192.8 109.3L192.6 121.4L192.6 121.4L186.8 119.8L180.5 120.0L177.1 120.7L172.5 119.0L165.7 116.9L161.2 115.1L161.2 101.6L144.1 101.6Z" fill="#f4877f"/><path d="M143.9 101.6L161.2 101.6L161.2 115.1L165.7 116.9L172.5 119.0L177.1 120.7L180.5 120.0L186.8 119.8L192.6 121.4L195.1 122.1L195.1 125.8L195.1 132.6L196.4 135.2L197.9 138.6L197.0 142.5L196.7 145.8L196.1 147.8L191.3 150.1L188.5 152.7L183.9 155.6L179.4 158.2L177.1 161.4L176.0 165.2L176.5 168.4L177.4 171.9L175.4 172.6L171.4 171.3L166.3 169.1L164.0 162.0L159.5 156.9L157.2 151.7L153.2 147.3L148.1 146.6L145.8 147.8L143.2 152.5L138.4 150.4L135.6 148.4L133.3 141.9L127.0 136.6L124.0 134.0L123.5 132.6L143.8 132.6Z" fill="#f4877f"/><path d="M176.9 4.2L188.8 4.2L188.8 0.9L190.7 1.6L191.9 6.8L196.4 7.7L199.8 7.7L203.8 9.4L209.5 12.3L213.5 11.1L220.3 12.8L215.2 15.3L210.7 19.5L206.7 23.5L205.0 24.0L205.0 28.8L202.4 32.7L202.4 37.6L202.1 39.6L206.7 42.4L210.7 46.4L211.1 49.5L181.4 49.5L181.4 49.5L181.4 35.2L179.1 32.7L180.7 30.0L180.7 30.0L180.7 29.5L179.4 22.0L179.1 17.0L177.7 12.8L176.9 4.2Z" fill="#41d6e4"/><path d="M181.4 49.5L211.1 49.5L211.8 53.4L214.4 57.3L216.9 61.1L216.1 64.6L212.1 65.7L211.8 70.2L210.0 73.4L208.2 71.7L185.2 71.9L185.2 71.9L184.8 71.0L184.5 67.2L183.3 63.4L181.4 57.4L180.8 53.4L181.4 49.5Z" fill="#78f0a8"/><path d="M185.2 71.9L208.2 71.7L210.0 73.4L209.5 76.9L210.7 79.2L214.1 83.6L216.9 85.0L217.0 86.3L216.1 89.4L218.6 91.9L220.8 95.9L223.0 98.0L222.6 100.5L221.4 101.6L220.3 103.0L219.8 105.1L215.9 105.1L217.5 102.3L217.2 101.6L191.8 101.6L191.8 82.7L190.2 78.1L187.8 76.2Z" fill="#fcb96c"/><path d="M191.8 101.6L217.2 101.6L217.5 102.3L215.9 105.1L219.8 105.1L217.7 111.2L216.3 112.1L214.6 115.5L212.4 120.4L211.5 125.8L195.1 125.8L195.1 122.1L192.6 121.4L192.8 109.3Z" fill="#fcb96c"/><path d="M195.1 125.8L211.5 125.8L211.8 129.2L210.1 135.2L208.9 139.2L219.6 139.2L218.9 141.4L220.3 144.6L221.5 145.5L222.0 148.4L223.7 151.1L221.5 152.7L219.2 150.4L217.5 151.7L213.5 152.0L210.7 149.1L206.7 148.4L203.3 148.6L199.3 147.3L196.1 147.8L196.1 147.8L196.7 145.8L197.0 142.5L197.9 138.6L196.4 135.2L195.1 132.6Z" fill="#78f0a8"/><path d="M205.0 24.0L206.7 23.7L212.4 22.0L213.8 21.6L215.7 24.8L223.2 28.3L228.9 30.1L230.6 34.8L231.7 36.8L229.4 41.2L232.8 38.4L235.1 35.6L232.3 41.6L231.1 47.1L230.0 53.0L230.6 57.3L214.4 57.3L211.8 53.4L211.1 49.5L210.7 46.4L206.7 42.4L202.1 39.6L202.4 37.6L202.4 32.7L205.0 28.8Z" fill="#f4877f"/><path d="M214.4 57.3L230.6 57.3L232.1 63.0L232.1 81.0L231.4 84.3L229.7 89.4L229.1 92.3L226.9 95.2L226.6 97.5L223.0 98.0L220.8 95.9L218.6 91.9L216.1 89.4L217.0 86.3L216.9 85.0L214.1 83.6L210.7 79.2L209.5 76.9L210.0 73.4L211.8 70.2L212.1 65.7L216.1 64.6L216.9 61.1L214.4 57.3Z" fill="#41d6e4"/><path d="M232.1 63.0L236.1 63.0L247.6 63.0L247.5 82.8L244.2 85.5L242.2 88.9L239.1 89.8L236.3 91.0L231.7 91.2L229.1 92.3L229.7 89.4L231.4 84.3L232.1 81.0Z" fill="#78f0a8"/><path d="M247.6 63.2L255.3 63.2L259.6 64.9L265.3 64.9L272.0 61.3L272.0 71.4L271.2 73.2L270.8 75.7L270.0 78.8L266.7 80.5L266.1 81.6L264.9 83.9L262.8 84.7L262.4 86.5L261.0 87.8L260.1 87.8L258.7 85.5L256.2 86.3L253.9 86.1L250.5 83.9L249.3 82.8L247.5 82.8Z" fill="#41d6e4"/><path d="M236.1 63.0L247.6 63.0L255.3 63.2L257.0 60.7L257.3 58.8L260.7 56.5L261.2 53.4L260.1 48.7L260.1 46.0L258.2 45.0L255.6 46.4L252.8 48.3L255.3 43.6L256.2 37.6L252.8 33.5L248.2 31.3L246.5 32.3L245.0 35.0L243.1 36.0L240.5 38.4L239.4 40.0L238.0 45.2L238.0 48.7L239.4 51.8L239.7 55.0L239.1 58.1L237.4 61.1Z" fill="#fcb96c"/><path d="M215.7 24.8L219.2 22.5L222.6 21.6L227.2 19.5L229.7 17.3L230.6 17.9L226.9 22.5L226.9 23.3L230.0 22.0L232.8 24.9L237.4 25.8L241.4 23.9L246.8 23.1L248.8 25.8L250.2 25.4L251.6 27.4L255.0 29.5L252.8 29.9L248.2 30.7L243.7 29.1L239.1 30.3L237.4 32.3L234.8 31.5L231.7 36.8L230.6 34.8L228.9 30.1L223.2 28.3Z" fill="#fcb96c"/><path d="M223.0 98.0L226.6 97.5L226.9 95.2L229.1 92.3L229.1 92.3L231.7 91.2L236.3 91.0L239.1 89.8L242.2 88.9L244.2 85.5L247.5 82.8L247.5 82.8L249.3 82.8L250.5 83.9L253.9 86.1L256.2 86.3L258.7 85.5L260.1 87.8L260.4 90.8L261.9 93.0L263.7 94.2L259.6 97.7L254.0 100.9L229.0 100.5L229.0 101.6L221.4 101.6L222.6 100.5Z" fill="#41d6e4"/><path d="M221.4 101.6L229.0 101.6L229.0 100.5L254.0 100.9L265.4 100.9L263.3 104.2L260.1 105.1L257.3 106.7L255.0 108.1L252.2 109.3L250.4 112.1L216.3 112.1L217.7 111.2L219.8 105.1L220.3 103.0Z" fill="#f4877f"/><path d="M216.3 112.1L228.3 112.1L228.9 112.8L227.0 132.6L227.2 143.4L223.7 143.3L220.3 144.6L218.9 141.4L219.6 139.2L208.9 139.2L210.1 135.2L211.8 129.2L211.5 125.8L212.4 120.4L214.6 115.5Z" fill="#f4877f"/><path d="M228.3 112.1L243.1 112.1L245.5 126.7L246.5 130.5L246.2 135.9L246.5 139.2L231.7 139.2L232.8 141.9L232.2 144.0L230.0 144.2L230.0 141.5L228.9 142.2L228.9 143.9L227.2 143.4L227.0 132.6L228.9 112.8Z" fill="#fcb96c"/><path d="M243.1 112.1L257.3 112.1L255.9 114.2L258.4 115.7L260.4 119.0L263.8 122.5L266.4 125.8L268.7 131.9L270.1 132.3L268.4 134.6L267.5 137.9L266.7 141.1L263.6 141.9L263.3 143.5L262.4 142.1L247.3 141.2L246.5 139.2L246.2 135.9L246.5 130.5L245.5 126.7Z" fill="#78f0a8"/><path d="M231.7 139.2L246.5 139.2L247.3 141.2L262.4 142.1L263.3 143.5L263.6 141.9L266.7 141.1L267.0 143.2L267.8 147.1L269.5 152.4L271.8 155.9L273.2 162.0L274.8 166.5L274.4 172.9L272.7 176.7L268.7 177.1L265.3 172.2L263.0 168.4L261.3 164.6L259.6 160.8L259.0 157.5L259.9 153.0L257.3 151.1L255.0 147.8L252.2 145.2L249.9 146.5L246.5 148.4L244.5 148.0L242.5 144.8L238.0 143.3L234.0 143.7L232.2 144.0L232.8 141.9Z" fill="#41d6e4"/><path d="M257.3 112.1L261.9 110.7L269.0 111.0L269.0 111.7L269.6 111.4L270.5 113.3L276.8 113.5L283.2 120.0L280.6 122.4L279.5 124.8L278.6 125.8L275.5 127.8L272.4 130.5L270.1 132.3L268.7 131.9L266.4 125.8L263.8 122.5L260.4 119.0L258.4 115.7L255.9 114.2L257.3 112.1Z" fill="#f4877f"/><path d="M250.4 112.1L257.3 112.1L261.9 110.7L269.0 111.0L269.0 111.7L269.6 111.4L270.5 113.3L276.8 113.5L283.2 120.0L286.6 120.0L289.2 116.9L294.0 114.2L294.7 114.9L297.7 111.7L300.4 110.5L300.7 107.9L299.4 103.7L298.4 101.2L265.4 100.9L263.3 104.2L260.1 105.1L257.3 106.7L255.0 108.1L252.2 109.3Z" fill="#fcb96c"/><path d="M254.0 100.9L298.4 101.2L297.8 98.7L296.0 98.0L296.0 94.4L296.0 91.6L292.0 88.7L290.3 87.9L291.8 85.0L289.2 82.8L287.9 81.2L287.3 82.6L284.3 80.6L281.4 85.3L279.3 87.4L276.9 86.6L276.1 88.9L273.2 93.1L273.2 94.4L270.0 94.9L268.0 96.3L265.4 96.6L263.7 94.2L259.6 97.7Z" fill="#fcb96c"/><path d="M298.0 96.9L298.3 93.7L299.7 91.2L302.0 90.6L300.0 94.4Z" fill="#fcb96c"/><path d="M260.1 87.8L261.0 87.8L262.4 86.5L262.8 84.7L264.9 83.9L266.1 81.6L266.7 80.5L270.0 78.8L270.8 75.7L271.2 73.2L272.0 71.4L272.0 78.3L277.9 78.3L277.9 82.1L280.3 80.0L282.0 78.8L283.8 79.5L285.2 78.6L287.3 79.2L287.9 81.2L287.3 82.6L284.3 80.6L281.4 85.3L279.3 87.4L276.9 86.6L276.1 88.9L273.2 93.1L273.2 94.4L270.0 94.9L268.0 96.3L265.4 96.6L263.7 94.2L261.9 93.0L260.4 90.8L260.1 87.8Z" fill="#78f0a8"/><path d="M277.9 78.3L298.9 78.3L299.4 87.6L303.1 87.6L302.0 90.6L299.7 91.2L298.3 89.4L296.3 87.9L296.0 84.3L297.1 80.6L294.9 82.1L294.9 87.2L296.0 91.6L292.0 88.7L290.3 87.9L291.8 85.0L289.2 82.8L287.9 81.2L287.3 79.2L285.2 78.6L283.8 79.5L282.0 78.8L280.3 80.0L277.9 82.1Z" fill="#f4877f"/><path d="M298.9 78.3L300.0 77.5L301.1 77.7L300.3 80.3L301.1 83.6L302.8 85.0L303.1 87.6L299.4 87.6Z" fill="#41d6e4"/><path d="M272.0 61.3L276.3 59.1L276.3 61.1L301.4 61.1L303.0 63.0L305.1 66.0L302.6 68.9L302.2 71.7L304.8 74.7L302.8 76.9L301.1 77.7L300.0 77.5L298.9 78.3L272.0 78.3Z" fill="#fcb96c"/><path d="M305.1 66.0L309.6 68.7L309.0 71.0L307.7 72.5L309.1 72.8L308.5 78.1L306.8 80.6L303.7 84.1L301.7 81.4L300.3 79.9L301.1 77.7L302.8 76.9L304.8 74.7L302.2 71.7L302.6 68.9Z" fill="#78f0a8"/><path d="M276.3 59.1L280.6 55.7L281.2 54.2L280.3 51.4L286.3 50.5L292.0 51.3L296.6 49.1L296.6 45.6L295.7 44.8L298.8 42.0L301.7 38.8L304.8 37.6L312.8 37.6L312.8 41.6L312.5 45.6L313.3 48.7L313.2 55.3L311.9 60.7L312.0 67.1L310.6 68.0L311.1 68.9L309.6 70.2L309.0 71.0L309.6 68.7L305.1 66.0L303.0 63.0L301.4 61.1L276.3 61.1Z" fill="#78f0a8"/><path d="M308.9 71.7L310.5 71.7L316.5 70.4L321.2 68.2L318.2 68.9L318.7 67.6L316.8 68.9L310.8 69.5L309.4 70.6Z" fill="#78f0a8"/><path d="M312.8 37.6L323.3 37.6L322.7 41.6L320.2 44.8L319.3 47.5L318.2 51.1L317.9 53.4L317.8 55.5L313.2 55.3L313.3 48.7L312.5 45.6L312.8 41.6L312.8 37.6Z" fill="#f4877f"/><path d="M323.3 37.6L323.9 35.6L325.7 35.2L326.1 43.2L326.3 47.1L326.3 50.7L327.6 52.9L327.2 54.4L326.1 54.5L324.7 55.4L317.8 55.5L317.9 53.4L318.2 51.1L319.3 47.5L320.2 44.8L322.7 41.6Z" fill="#41d6e4"/><path d="M325.7 35.2L327.3 34.4L329.6 31.5L330.4 28.2L331.8 23.7L336.2 17.4L338.1 19.7L341.5 18.2L344.3 20.6L344.5 29.9L344.6 31.1L346.3 32.7L346.3 35.2L347.2 36.4L349.0 39.2L345.5 41.6L342.1 43.2L338.7 42.4L336.9 45.8L333.0 47.5L330.7 48.7L328.7 51.1L327.8 52.8L326.3 50.7L326.3 47.1L326.1 43.2Z" fill="#fcb96c"/><path d="M313.2 55.3L317.8 55.5L324.7 55.4L326.1 54.5L327.2 54.4L328.4 56.1L326.1 58.4L327.8 59.6L328.1 61.5L329.0 62.9L331.8 62.7L330.7 60.6L332.1 61.9L332.1 63.6L328.3 64.7L327.8 63.4L325.5 64.9L325.4 63.6L324.0 61.0L311.9 60.7Z" fill="#78f0a8"/><path d="M311.9 60.7L321.6 61.0L321.6 64.2L321.2 66.3L315.3 66.8L311.1 68.9L310.6 68.0L312.0 67.1Z" fill="#fcb96c"/><path d="M321.6 61.0L324.0 61.0L325.4 63.6L325.5 64.9L323.9 65.3L323.4 66.0L321.2 66.3L321.6 64.2Z" fill="#41d6e4"/></g><path d="M297.7 104.0L298.8 104.4L299.9 107.9L299.4 109.9L296.0 112.1L294.6 111.9L295.4 110.0L298.0 108.2L297.1 105.8Z" fill="#aad3df" stroke="#fff" stroke-opacity="0.7" stroke-width="0.8"/></svg>
<div class="b" style="left:900.7px;top:252.3px;width:32.3px;height:63.3px;border-radius:5px;background:rgba(0,0,0,0.22)"></div>
<div class="b" style="left:902px;top:253.6px;width:29.8px;height:60.6px;border-radius:3.5px;background:#fff"></div>
<div class="b" style="left:902px;top:283.1px;width:29.799999999999955px;height:0.8999999999999773px;background:#ccc;"></div>
<span id="zp" class="t" style="left:902.00px;top:257.26px;font:400 24.5px/1 'Liberation Sans', sans-serif;color:#000;width:29.8px;text-align:center;">+</span>
<span id="zm" class="t" style="left:902.00px;top:286.86px;font:400 24.5px/1 'Liberation Sans', sans-serif;color:#000;width:29.8px;text-align:center;">&#x2212;</span>
<div class="t" id="attr" style="left:1042px;top:408px;height:16.5px;padding:0 5px;background:rgba(255,255,255,0.8);font:12px/16.5px 'Liberation Sans',sans-serif;color:#333"><span style="color:#0078a8">Leaflet</span>, &copy; <span style="color:#0078a8">OpenStreetMap</span> contributors</div>
<svg class="b" style="left:1271px;top:210px;" width="16.200000000000045" height="16" viewBox="0 0 16.200000000000045 16"><path d="M8.100000000000023 0.9H15.300000000000045V8.0M15.300000000000045 0.9L0.9 15.1M0.9 8.0V15.1H8.100000000000023" fill="none" stroke="#6a6b72" stroke-width="1.8"/></svg>
<div class="b" style="left:15px;top:474px;width:1278px;height:310px;background:#21232b;"></div>
<span id="tt" class="t" style="left:52.00px;top:495.99px;font:700 11px/1 'Liberation Sans', sans-serif;color:#fff;-webkit-text-stroke:0.35px #fff;transform:scaleX(0.9716);transform-origin:0 0;">CUSTOMERS</span>
<div class="b" style="left:751px;top:482px;width:211px;height:40px;background:#292a32;border-radius:5px;"></div>
<div class="b" style="left:974.8px;top:482px;width:212.20000000000005px;height:40px;background:#292a32;border-radius:5px;"></div>
<span id="dd1" class="t" style="left:762.50px;top:496.28px;font:700 12.9px/1 'Liberation Sans', sans-serif;color:#cfcfd1;transform:scaleX(0.9143);transform-origin:0 0;">STATUS</span>
<span id="dd2" class="t" style="left:987.00px;top:496.28px;font:700 12.9px/1 'Liberation Sans', sans-serif;color:#cfcfd1;transform:scaleX(0.8661);transform-origin:0 0;">OCCUPATION</span>
<svg class="b" style="left:931.5px;top:497.5px;" width="13.5" height="9.5" viewBox="931.5 497.5 13.5 9.5"><path d="M932.8 499.3L938.25 504.8L943.7 499.3" fill="none" stroke="#85868c" stroke-width="1.6"/></svg>
<svg class="b" style="left:1156.5px;top:497.5px;" width="13.5" height="9.5" viewBox="1156.5 497.5 13.5 9.5"><path d="M1157.8 499.3L1163.25 504.8L1168.7 499.3" fill="none" stroke="#85868c" stroke-width="1.6"/></svg>
<svg class="b" style="left:1224px;top:480.3px;" width="14.299999999999955" height="16.30000000000001" viewBox="0 0 14.3 16.3"><path d="M2 0H8.6L14.3 5.7V14.3a2 2 0 0 1-2 2H2A2 2 0 0 1 0 14.3V2A2 2 0 0 1 2 0z" fill="#5d5e65"/><path d="M8.3 1.600V6.200H12.800z" fill="#21232b"/><path d="M4.200 8.200L10.200 15.400M10.200 8.200L4.200 15.400" stroke="#21232b" stroke-width="1.400"/></svg>
<svg class="b" style="left:1248px;top:480.3px;" width="14.299999999999955" height="16.30000000000001" viewBox="0 0 14.3 16.3"><path d="M2 0H8.6L14.3 5.7V14.3a2 2 0 0 1-2 2H2A2 2 0 0 1 0 14.3V2A2 2 0 0 1 2 0z" fill="#5d5e65"/><path d="M8.300 1.600V6.200H12.800z" fill="#21232b"/><path d="M4.600 8.300H9.400V11.400C9.400 13.300 8.300 14.400 6.500 14.900L6 13.800C7 13.400 7.400 12.800 7.400 11.900H4.600z" fill="#21232b"/></svg>
<svg class="b" style="left:1271.4px;top:480.4px;" width="15.799999999999955" height="15.400000000000034" viewBox="0 0 15.799999999999955 15.400000000000034"><path d="M7.899999999999977 0.9H14.899999999999954V7.700000000000017M14.899999999999954 0.9L0.9 14.500000000000034M0.9 7.700000000000017V14.500000000000034H7.899999999999977" fill="none" stroke="#6a6b72" stroke-width="1.8"/></svg>
<span id="h0" class="t" style="left:64.60px;top:553.14px;font:400 12.6px/1 'DejaVu Sans', sans-serif;color:#dededf;">ID</span>
<span id="h1" class="t" style="left:197.40px;top:553.14px;font:400 12.6px/1 'DejaVu Sans', sans-serif;color:#dededf;letter-spacing:0.048px;">Name</span>
<span id="h2" class="t" style="left:330.00px;top:553.14px;font:400 12.6px/1 'DejaVu Sans', sans-serif;color:#dededf;letter-spacing:-0.308px;">Status</span>
<span id="h3" class="t" style="left:462.30px;top:553.14px;font:400 12.6px/1 'DejaVu Sans', sans-serif;color:#dededf;letter-spacing:-0.411px;">Occupati...</span>
<span id="h4" class="t" style="left:595.50px;top:553.14px;font:400 12.6px/1 'DejaVu Sans', sans-serif;color:#dededf;letter-spacing:-0.305px;">Marital Status</span>
<span id="h5" class="t" style="left:727.60px;top:553.14px;font:400 12.6px/1 'DejaVu Sans', sans-serif;color:#dededf;letter-spacing:0.296px;">Phone</span>
<span id="h6" class="t" style="right:339.19px;top:553.14px;font:400 12.6px/1 'DejaVu Sans', sans-serif;color:#dededf;letter-spacing:-0.194px;">Avg Children</span>
<span id="h7" class="t" style="right:205.99px;top:553.14px;font:400 12.6px/1 'DejaVu Sans', sans-serif;color:#dededf;letter-spacing:-0.187px;">Vehicles</span>
<span id="h8" class="t" style="right:73.16px;top:553.14px;font:400 12.6px/1 'DejaVu Sans', sans-serif;color:#dededf;letter-spacing:-0.358px;">Sales</span>
<svg class="b" style="left:535px;top:553px;" width="13" height="13" viewBox="535 553 13 13"><path d="M541.1 555.2V563M537.3 559.4L541.1 563.2L544.9 559.4" fill="none" stroke="#e8e8e8" stroke-width="1.3"/></svg>
<svg class="b" style="left:555.2px;top:553.4px;" width="11.599999999999909" height="11.600000000000023" viewBox="4 4 16 16"><path d="M4.25 5.61C6.27 8.2 10 13 10 13v6c0 .55.45 1 1 1h2c.55 0 1-.45 1-1v-6s3.72-4.8 5.74-7.39A.998.998 0 0 0 18.95 4H5.04c-.83 0-1.3.95-.79 1.61z" fill="#f2f2f2"/></svg>
<div class="b" style="left:51px;top:574.6px;width:1196px;height:1.1999999999999318px;background:#dcdcdc;"></div>
<span id="r0a" class="t" style="left:65.88px;top:587.36px;font:400 12.8px/1 'Liberation Sans', sans-serif;color:#86878c;letter-spacing:-0.362px;"><span style="margin:0 -0.1em">1</span>232<span style="margin:0 -0.1em">1</span></span>
<span id="r0b" class="t" style="left:197.40px;top:587.37px;font:400 12.8px/1 'DejaVu Sans', sans-serif;color:#86878c;letter-spacing:0.205px;">Rosa Hu</span>
<span id="r0c" class="t" style="left:330.00px;top:587.37px;font:400 12.8px/1 'DejaVu Sans', sans-serif;color:#86878c;letter-spacing:0.220px;">Pending Appr...</span>
<span id="r0d" class="t" style="left:462.30px;top:587.37px;font:400 12.8px/1 'DejaVu Sans', sans-serif;color:#86878c;letter-spacing:0.172px;">Skilled Manual</span>
<span id="r0e" class="t" style="left:595.50px;top:587.37px;font:400 12.8px/1 'DejaVu Sans', sans-serif;color:#86878c;">M</span>
<span id="r0f" class="t" style="left:728.88px;top:587.36px;font:400 12.8px/1 'Liberation Sans', sans-serif;color:#86878c;letter-spacing:0.225px;"><span style="margin:0 -0.1em">1</span> (<span style="margin:0 -0.1em">1</span><span style="margin:0 -0.1em">1</span>) 500 555-0<span style="margin:0 -0.1em">1</span>...</span>
<span id="r0g" class="t" style="right:338.10px;top:587.36px;font:400 12.8px/1 'Liberation Sans', sans-serif;color:#86878c;letter-spacing:0.902px;">2.0</span>
<span id="r0h" class="t" style="right:205.95px;top:587.36px;font:400 12.8px/1 'Liberation Sans', sans-serif;color:#86878c;letter-spacing:0.652px;">2.0</span>
<div class="b" style="left:1126px;top:585px;width:108.29999999999995px;height:15px;background:#e0e0e0;border-radius:2.5px;"></div>
<div class="b" style="left:1126px;top:585px;width:95px;height:15px;background:#f0b90b;border-radius:2.5px 0 0 2.5px"></div>
<span id="r0s" class="t" style="left:1132.20px;top:586.94px;font:400 12px/1 'Liberation Sans', sans-serif;color:#3a3a3a;letter-spacing:0.202px;">$13,216</span>
<span id="r1a" class="t" style="left:65.88px;top:621.36px;font:400 12.8px/1 'Liberation Sans', sans-serif;color:#86878c;letter-spacing:0.359px;"><span style="margin:0 -0.1em">1</span>3592</span>
<span id="r1b" class="t" style="left:197.40px;top:621.37px;font:400 12.8px/1 'DejaVu Sans', sans-serif;color:#86878c;letter-spacing:-0.007px;">Gabriella Collins</span>
<span id="r1c" class="t" style="left:330.00px;top:621.37px;font:400 12.8px/1 'DejaVu Sans', sans-serif;color:#86878c;letter-spacing:0.220px;">Pending Appr...</span>
<span id="r1d" class="t" style="left:462.30px;top:621.37px;font:400 12.8px/1 'DejaVu Sans', sans-serif;color:#86878c;letter-spacing:0.172px;">Skilled Manual</span>
<span id="r1e" class="t" style="left:595.50px;top:621.37px;font:400 12.8px/1 'DejaVu Sans', sans-serif;color:#86878c;">M</span>
<span id="r1f" class="t" style="left:728.88px;top:621.36px;font:400 12.8px/1 'Liberation Sans', sans-serif;color:#86878c;letter-spacing:0.225px;"><span style="margin:0 -0.1em">1</span> (<span style="margin:0 -0.1em">1</span><span style="margin:0 -0.1em">1</span>) 500 555-0<span style="margin:0 -0.1em">1</span>...</span>
<span id="r1g" class="t" style="right:338.10px;top:621.36px;font:400 12.8px/1 'Liberation Sans', sans-serif;color:#86878c;letter-spacing:0.902px;">2.0</span>
<span id="r1h" class="t" style="right:205.95px;top:621.36px;font:400 12.8px/1 'Liberation Sans', sans-serif;color:#86878c;letter-spacing:0.652px;">2.0</span>
<div class="b" style="left:1126px;top:619px;width:108.29999999999995px;height:15px;background:#e0e0e0;border-radius:2.5px;"></div>
<div class="b" style="left:1126px;top:619px;width:70px;height:15px;background:#f0b90b;border-radius:2.5px 0 0 2.5px"></div>
<span id="r1s" class="t" style="left:1132.20px;top:620.94px;font:400 12px/1 'Liberation Sans', sans-serif;color:#3a3a3a;letter-spacing:0.039px;">$9,696</span>
<span id="r2a" class="t" style="left:65.88px;top:655.36px;font:400 12.8px/1 'Liberation Sans', sans-serif;color:#86878c;letter-spacing:1.109px;"><span style="margin:0 -0.1em">1</span>4200</span>
<span id="r2b" class="t" style="left:197.40px;top:655.37px;font:400 12.8px/1 'DejaVu Sans', sans-serif;color:#86878c;letter-spacing:0.020px;">Colleen Goel</span>
<span id="r2c" class="t" style="left:330.00px;top:655.37px;font:400 12.8px/1 'DejaVu Sans', sans-serif;color:#86878c;letter-spacing:0.043px;">Inactive</span>
<span id="r2d" class="t" style="left:462.30px;top:655.37px;font:400 12.8px/1 'DejaVu Sans', sans-serif;color:#86878c;letter-spacing:0.172px;">Skilled Manual</span>
<span id="r2e" class="t" style="left:595.50px;top:655.37px;font:400 12.8px/1 'DejaVu Sans', sans-serif;color:#86878c;">M</span>
<span id="r2f" class="t" style="left:728.88px;top:655.36px;font:400 12.8px/1 'Liberation Sans', sans-serif;color:#86878c;letter-spacing:0.225px;"><span style="margin:0 -0.1em">1</span> (<span style="margin:0 -0.1em">1</span><span style="margin:0 -0.1em">1</span>) 500 555-0<span style="margin:0 -0.1em">1</span>...</span>
<span id="r2g" class="t" style="right:338.59px;top:655.36px;font:400 12.8px/1 'Liberation Sans', sans-serif;color:#86878c;letter-spacing:0.409px;"><span style="margin:0 -0.1em">1</span>.0</span>
<span id="r2h" class="t" style="right:205.50px;top:655.36px;font:400 12.8px/1 'Liberation Sans', sans-serif;color:#86878c;letter-spacing:1.102px;">4.0</span>
<div class="b" style="left:1126px;top:653px;width:108.29999999999995px;height:15px;background:#e0e0e0;border-radius:2.5px;"></div>
<div class="b" style="left:1126px;top:653px;width:68.09999999999991px;height:15px;background:#f0b90b;border-radius:2.5px 0 0 2.5px"></div>
<span id="r2s" class="t" style="left:1132.20px;top:654.94px;font:400 12px/1 'Liberation Sans', sans-serif;color:#3a3a3a;letter-spacing:0.079px;">$9,422</span>
<span id="r3a" class="t" style="left:65.88px;top:689.36px;font:400 12.8px/1 'Liberation Sans', sans-serif;color:#86878c;letter-spacing:0.359px;"><span style="margin:0 -0.1em">1</span>3595</span>
<span id="r3b" class="t" style="left:197.40px;top:689.37px;font:400 12.8px/1 'DejaVu Sans', sans-serif;color:#86878c;letter-spacing:-0.016px;">Cole Stewart</span>
<span id="r3c" class="t" style="left:330.00px;top:689.37px;font:400 12.8px/1 'DejaVu Sans', sans-serif;color:#86878c;letter-spacing:0.043px;">Inactive</span>
<span id="r3d" class="t" style="left:462.30px;top:689.37px;font:400 12.8px/1 'DejaVu Sans', sans-serif;color:#86878c;letter-spacing:0.172px;">Skilled Manual</span>
<span id="r3e" class="t" style="left:595.50px;top:689.37px;font:400 12.8px/1 'DejaVu Sans', sans-serif;color:#86878c;">S</span>
<span id="r3f" class="t" style="left:728.88px;top:689.36px;font:400 12.8px/1 'Liberation Sans', sans-serif;color:#86878c;letter-spacing:0.225px;"><span style="margin:0 -0.1em">1</span> (<span style="margin:0 -0.1em">1</span><span style="margin:0 -0.1em">1</span>) 500 555-0<span style="margin:0 -0.1em">1</span>...</span>
<span id="r3g" class="t" style="right:338.10px;top:689.36px;font:400 12.8px/1 'Liberation Sans', sans-serif;color:#86878c;letter-spacing:0.902px;">2.0</span>
<span id="r3h" class="t" style="right:205.95px;top:689.36px;font:400 12.8px/1 'Liberation Sans', sans-serif;color:#86878c;letter-spacing:0.652px;">2.0</span>
<div class="b" style="left:1126px;top:687px;width:108.29999999999995px;height:15px;background:#e0e0e0;border-radius:2.5px;"></div>
<div class="b" style="left:1126px;top:687px;width:68.09999999999991px;height:15px;background:#f0b90b;border-radius:2.5px 0 0 2.5px"></div>
<span id="r3s" class="t" style="left:1132.20px;top:688.94px;font:400 12px/1 'Liberation Sans', sans-serif;color:#3a3a3a;letter-spacing:-0.181px;">$9,391</span>
<span id="x0" class="t" style="left:65.88px;top:723.36px;font:400 12.8px/1 'Liberation Sans', sans-serif;color:#1b1c22;letter-spacing:1.009px;"><span style="margin:0 -0.1em">1</span>4630</span>
<span id="x1" class="t" style="left:197.40px;top:723.37px;font:400 12.8px/1 'DejaVu Sans', sans-serif;color:#1b1c22;letter-spacing:0.122px;">Isabella Ward</span>
<span id="x2" class="t" style="left:330.00px;top:723.37px;font:400 12.8px/1 'DejaVu Sans', sans-serif;color:#1b1c22;letter-spacing:0.220px;">Pending Appr...</span>
<span id="x3" class="t" style="left:462.30px;top:723.37px;font:400 12.8px/1 'DejaVu Sans', sans-serif;color:#1b1c22;letter-spacing:0.172px;">Skilled Manual</span>
<span id="x4" class="t" style="left:595.50px;top:723.37px;font:400 12.8px/1 'DejaVu Sans', sans-serif;color:#1b1c22;">M</span>
<span id="x5" class="t" style="left:728.88px;top:723.36px;font:400 12.8px/1 'Liberation Sans', sans-serif;color:#1b1c22;letter-spacing:0.225px;"><span style="margin:0 -0.1em">1</span> (<span style="margin:0 -0.1em">1</span><span style="margin:0 -0.1em">1</span>) 500 555-0<span style="margin:0 -0.1em">1</span>...</span>
<div class="b" style="left:51px;top:714px;width:1195.3px;height:34px;background:rgba(46,47,56,0.82);"></div>
<div class="b" style="left:1126px;top:721px;width:108.29999999999995px;height:15px;background:#2c2d2f;border-radius:2.5px;"></div>
<span id="x6" class="t" style="left:1132.20px;top:722.94px;font:400 12px/1 'Liberation Sans', sans-serif;color:#25262b;">$9,3</span>
<span id="t0" class="t" style="right:338.45px;top:724.16px;font:700 13.4px/1 'Liberation Sans', sans-serif;color:#fff;letter-spacing:0.550px;"><span style="margin:0 -0.08em">1</span>.0</span>
<span id="t1" class="t" style="right:205.90px;top:724.16px;font:700 13.4px/1 'Liberation Sans', sans-serif;color:#fff;letter-spacing:0.100px;"><span style="margin:0 -0.08em">1</span>.5</span>
<span id="t2" class="t" style="right:72.99px;top:724.16px;font:700 13.4px/1 'Liberation Sans', sans-serif;color:#fff;letter-spacing:0.513px;">$29,358,677</span>
<div class="b" style="left:1246.3px;top:543px;width:10.4px;height:33px;background:#b4b4b4;border-radius:0 4.5px 0 0"></div>
<div class="b" style="left:1246.3px;top:576px;width:9.5px;height:172px;background:#f1f1f1;"></div>
<div class="b" style="left:1245.5px;top:576px;width:1.0px;height:138px;background:#17181c;"></div>
<div class="b" style="left:1247.5px;top:587px;width:6.400000000000091px;height:10.600000000000023px;background:#b9b9b9;"></div>
<svg class="b" style="left:1247px;top:579px;" width="8" height="6" viewBox="0 0 8 6"><path d="M1.2 4.6L4 1.6L6.800 4.6z" fill="#8a8a8a"/></svg>
<svg class="b" style="left:1246.5px;top:738px;" width="9.0" height="7" viewBox="0 0 9 7"><path d="M1 1.6L4.500 5.600L8 1.600z" fill="#222"/></svg>
</div>
</body></html>
